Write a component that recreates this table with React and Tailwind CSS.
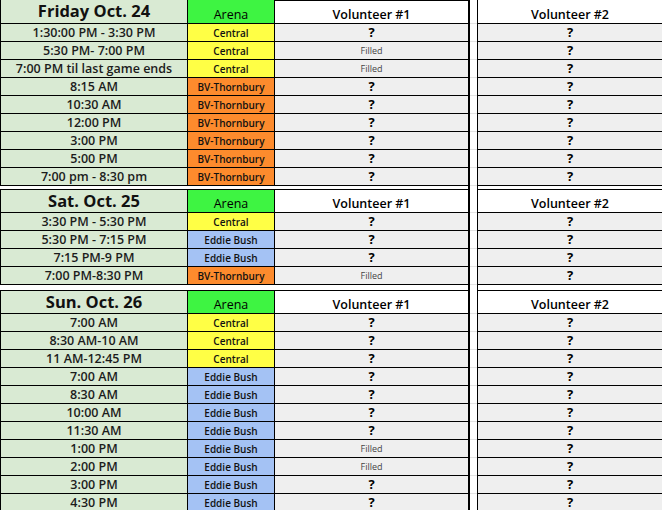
const days = [
  {
    day: 'Friday Oct. 24',
    rows: [
      ['1:30:00 PM - 3:30 PM', 'Central', '?'],
      ['5:30 PM- 7:00 PM', 'Central', 'Filled'],
      ['7:00 PM til last game ends', 'Central', 'Filled'],
      ['8:15 AM', 'BV-Thornbury', '?'],
      ['10:30 AM', 'BV-Thornbury', '?'],
      ['12:00 PM', 'BV-Thornbury', '?'],
      ['3:00 PM', 'BV-Thornbury', '?'],
      ['5:00 PM', 'BV-Thornbury', '?'],
      ['7:00 pm - 8:30 pm', 'BV-Thornbury', '?'],
    ],
  },
  {
    day: 'Sat. Oct. 25',
    rows: [
      ['3:30 PM - 5:30 PM', 'Central', '?'],
      ['5:30 PM - 7:15 PM', 'Eddie Bush', '?'],
      ['7:15 PM-9 PM', 'Eddie Bush', '?'],
      ['7:00 PM-8:30 PM', 'BV-Thornbury', 'Filled'],
    ],
  },
  {
    day: 'Sun. Oct. 26',
    rows: [
      ['7:00 AM', 'Central', '?'],
      ['8:30 AM-10 AM', 'Central', '?'],
      ['11 AM-12:45 PM', 'Central', '?'],
      ['7:00 AM', 'Eddie Bush', '?'],
      ['8:30 AM', 'Eddie Bush', '?'],
      ['10:00 AM', 'Eddie Bush', '?'],
      ['11:30 AM', 'Eddie Bush', '?'],
      ['1:00 PM', 'Eddie Bush', 'Filled'],
      ['2:00 PM', 'Eddie Bush', 'Filled'],
      ['3:00 PM', 'Eddie Bush', '?'],
      ['4:30 PM', 'Eddie Bush', '?'],
    ],
  },
]

const arenaBg = {
  Central: 'bg-[#ffff45]',
  'BV-Thornbury': 'bg-[#fd8b2d]',
  'Eddie Bush': 'bg-[#a4c2f4]',
}

function Slot({ value }) {
  if (value === 'Filled') {
    return <span className="text-[9px] text-[#444]">Filled</span>
  }
  return <span className="text-[13px] font-bold text-black">?</span>
}

function Row({ time, arena, v1 }) {
  return (
    <div className="flex h-[18px] leading-none">
      <div className="flex w-[188px] shrink-0 items-center justify-center border-x border-b border-black bg-[#d9ead3] pt-[1px] text-[12.5px] font-semibold text-[#1c1c1c]">
        {time}
      </div>
      <div className={`flex w-[87px] shrink-0 items-center justify-center border-r border-b border-black text-[10px] font-semibold text-[#111] ${arenaBg[arena]}`}>
        {arena}
      </div>
      <div className="flex w-[195px] shrink-0 items-center justify-center border-r-2 border-b border-black bg-[#efefef]">
        <Slot value={v1} />
      </div>
      <div className="w-[7px] shrink-0 border-b border-[#e2e2e2] bg-white" />
      <div className="flex flex-1 items-center justify-center border-l border-b border-black bg-[#efefef]">
        <Slot value="?" />
      </div>
    </div>
  )
}

function Header({ day, first }) {
  const top = first ? '' : 'border-t'
  return (
    <div className="flex h-[24px]">
      <div className={`flex w-[188px] shrink-0 items-center justify-center border-x border-b border-black bg-[#d9ead3] text-[16.5px] leading-none font-bold text-[#111] ${top}`}>
        {day}
      </div>
      <div className={`flex w-[87px] shrink-0 items-end justify-center border-r border-b border-black bg-[#3ef442] pb-[2px] text-[12.5px] leading-none font-medium text-black ${top}`}>
        Arena
      </div>
      <div className="flex w-[195px] shrink-0 items-end justify-center border-t border-r-2 border-b border-black bg-white pb-[2px] text-[12.5px] leading-none font-semibold text-black">
        Volunteer #1
      </div>
      <div className="w-[7px] shrink-0 border-b border-[#e2e2e2] bg-white" />
      <div className={`flex flex-1 items-end justify-center border-l border-b border-black bg-white pb-[2px] text-[12.5px] leading-none font-semibold text-black ${top}`}>
        Volunteer #2
      </div>
    </div>
  )
}

function Spacer({ h }) {
  return (
    <div className={`flex ${h}`}>
      <div className="w-[275px] shrink-0 bg-white" />
      <div className="w-[195px] shrink-0 border-r-2 border-black bg-white" />
      <div className="w-[7px] shrink-0 bg-white" />
      <div className="flex-1 border-l border-black bg-white" />
    </div>
  )
}

export default function App() {
  return (
    <div className="h-[510px] w-[662px] overflow-hidden bg-white font-['Open_Sans','Noto_Sans',sans-serif]">
      {days.map((d, i) => (
        <div key={d.day}>
          {i === 1 && <Spacer h="h-[3px]" />}
          {i === 2 && <Spacer h="h-[5px]" />}
          <Header day={d.day} first={i === 0} />
          {d.rows.map((r, j) => (
            <Row key={j} time={r[0]} arena={r[1]} v1={r[2]} />
          ))}
        </div>
      ))}
    </div>
  )
}
